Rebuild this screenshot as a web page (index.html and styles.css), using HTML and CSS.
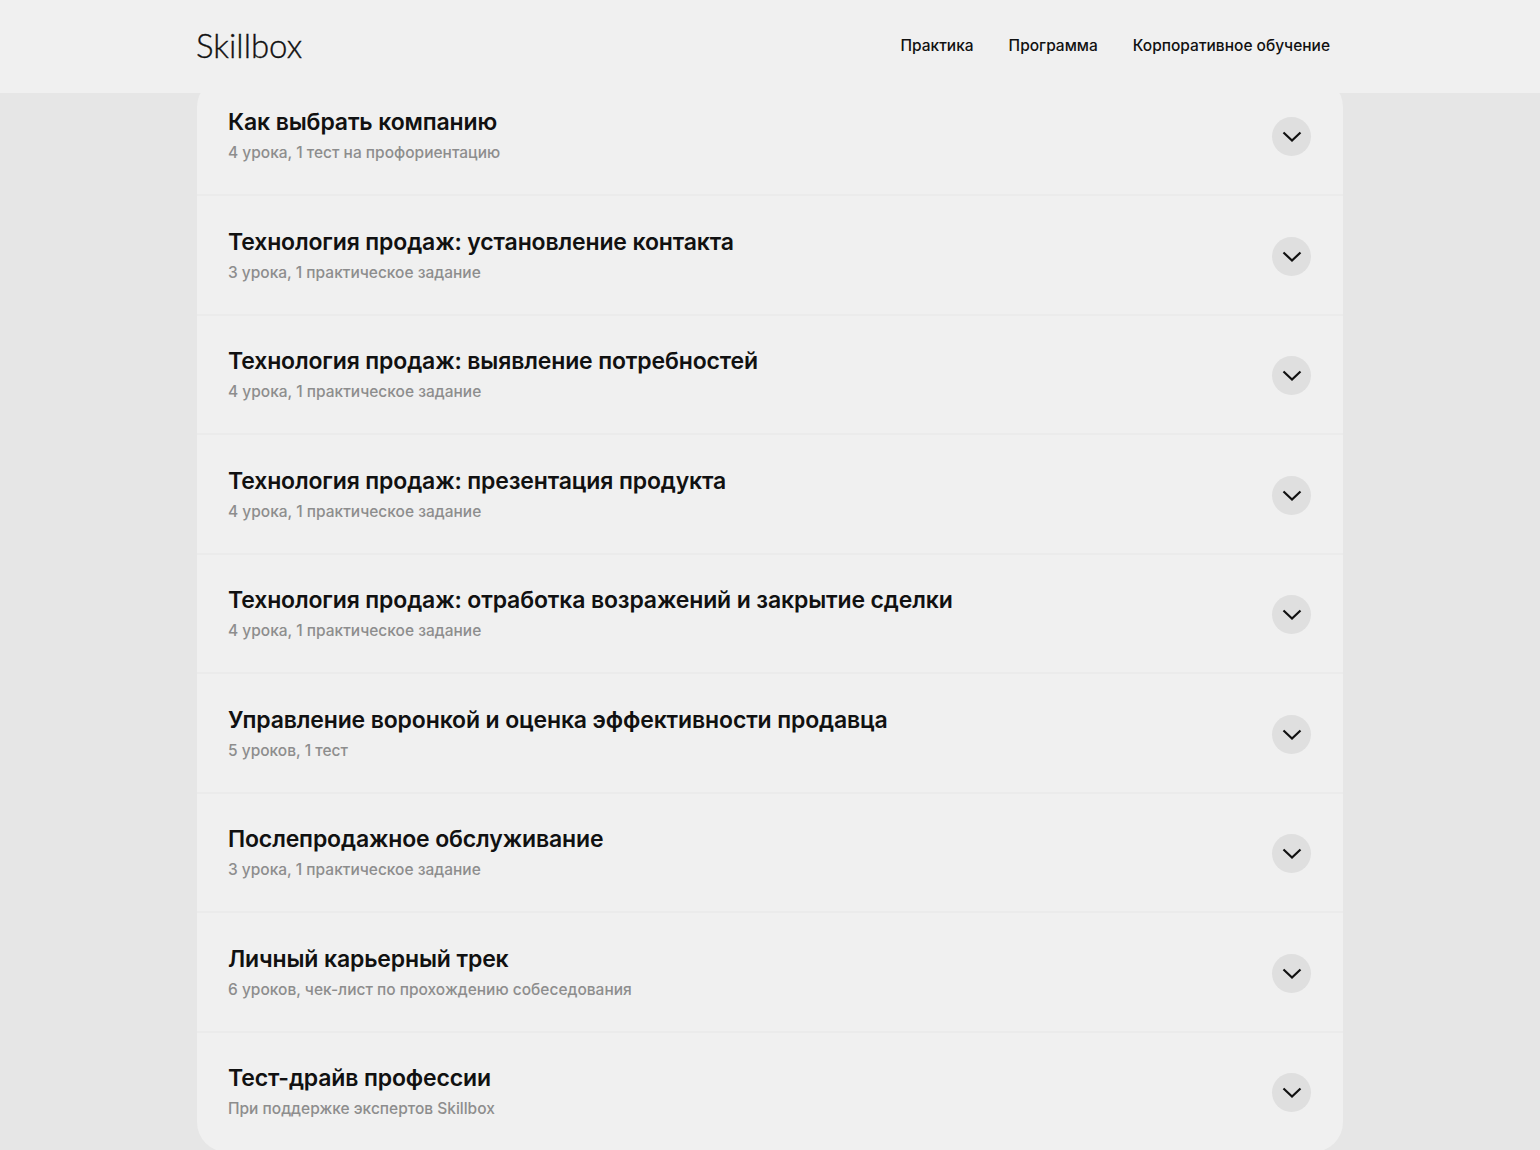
FILE: index.html
```
<!DOCTYPE html>
<html lang="ru">
<head>
<meta charset="utf-8">
<title>Skillbox</title>
<link rel="stylesheet" href="styles.css">
</head>
<body>
<header class="site-header">
  <div class="header-inner">
    <a class="logo" href="#">Skillbox</a>
    <nav class="nav">
      <a href="#">Практика</a>
      <a href="#">Программа</a>
      <a href="#">Корпоративное обучение</a>
    </nav>
  </div>
</header>
<main class="program">
  <article class="row"><div class="row-text"><h3>Как выбрать компанию</h3><p>4 урока, 1 тест на профориентацию</p></div><span class="toggle"><svg viewBox="0 0 20 12"><path d="M1.5 1.5l8.500 8 8.500-8"/></svg></span></article>
  <article class="row"><div class="row-text"><h3>Технология продаж: установление контакта</h3><p>3 урока, 1 практическое задание</p></div><span class="toggle"><svg viewBox="0 0 20 12"><path d="M1.5 1.5l8.500 8 8.500-8"/></svg></span></article>
  <article class="row"><div class="row-text"><h3>Технология продаж: выявление потребностей</h3><p>4 урока, 1 практическое задание</p></div><span class="toggle"><svg viewBox="0 0 20 12"><path d="M1.5 1.5l8.500 8 8.500-8"/></svg></span></article>
  <article class="row"><div class="row-text"><h3>Технология продаж: презентация продукта</h3><p>4 урока, 1 практическое задание</p></div><span class="toggle"><svg viewBox="0 0 20 12"><path d="M1.5 1.5l8.500 8 8.500-8"/></svg></span></article>
  <article class="row"><div class="row-text"><h3>Технология продаж: отработка возражений и закрытие сделки</h3><p>4 урока, 1 практическое задание</p></div><span class="toggle"><svg viewBox="0 0 20 12"><path d="M1.5 1.5l8.500 8 8.500-8"/></svg></span></article>
  <article class="row"><div class="row-text"><h3>Управление воронкой и оценка эффективности продавца</h3><p>5 уроков, 1 тест</p></div><span class="toggle"><svg viewBox="0 0 20 12"><path d="M1.5 1.5l8.500 8 8.500-8"/></svg></span></article>
  <article class="row"><div class="row-text"><h3>Послепродажное обслуживание</h3><p>3 урока, 1 практическое задание</p></div><span class="toggle"><svg viewBox="0 0 20 12"><path d="M1.5 1.5l8.500 8 8.500-8"/></svg></span></article>
  <article class="row"><div class="row-text"><h3>Личный карьерный трек</h3><p>6 уроков, чек-лист по прохождению собеседования</p></div><span class="toggle"><svg viewBox="0 0 20 12"><path d="M1.5 1.5l8.500 8 8.500-8"/></svg></span></article>
  <article class="row"><div class="row-text"><h3>Тест-драйв профессии</h3><p>При поддержке экспертов Skillbox</p></div><span class="toggle"><svg viewBox="0 0 20 12"><path d="M1.5 1.5l8.500 8 8.500-8"/></svg></span></article>
</main>
</body>
</html>
```
FILE: styles.css
```
html, body {
  margin: 0;
  height: 1150px;
  overflow: hidden;
  background: #e6e6e6;
  font-family: "Inter", "Noto Sans", sans-serif;
  color: #111;
}
.site-header {
  position: fixed;
  top: 0;
  left: 0;
  right: 0;
  height: 93px;
  background: #f0f0f0;
  z-index: 2;
}
.header-inner {
  width: 1134px;
  height: 100%;
  margin-left: 196px;
  display: flex;
  align-items: center;
  justify-content: space-between;
}
.logo {
  font-family: "Lato", sans-serif;
  font-weight: 300;
  font-size: 33px;
  line-height: 40px;
  padding-bottom: 3px;
  -webkit-text-stroke: 0.35px #111;
  color: #111;
  text-decoration: none;
}
.nav {
  display: flex;
  gap: 35px;
  padding-bottom: 2px;
}
.nav a {
  font-size: 15.5px;
  font-weight: 500;
  color: #111;
  text-decoration: none;
}
.program {
  width: 1146px;
  margin-left: 197px;
  padding-top: 76.75px;
}
.row {
  height: 119.5px;
  box-sizing: border-box;
  background: #f0f0f0;
  box-shadow: inset 0 -2px 0 #ebebeb;
  padding: 0 32px 0 31px;
  display: flex;
  align-items: center;
  justify-content: space-between;
}
.row:first-child {
  border-radius: 30px 30px 0 0;
}
.row:last-child {
  box-shadow: none;
  border-radius: 0 0 30px 30px;
}
.row-text {
  padding-bottom: 3px;
}
.row-text h3 {
  margin: 0 0 6px;
  font-size: 23px;
  line-height: 30px;
  font-weight: 600;
  letter-spacing: -0.14px;
}
.row-text p {
  margin: 0;
  font-size: 15.5px;
  line-height: 20px;
  font-weight: 500;
  color: #8d8d8d;
}
.toggle {
  width: 39px;
  height: 39px;
  border-radius: 50%;
  background: #dfdfdf;
  display: flex;
  align-items: center;
  justify-content: center;
}
.toggle svg {
  width: 20px;
  height: 12px;
  margin-top: 1px;
  fill: none;
  stroke: #111;
  stroke-width: 2.2;
}
```
